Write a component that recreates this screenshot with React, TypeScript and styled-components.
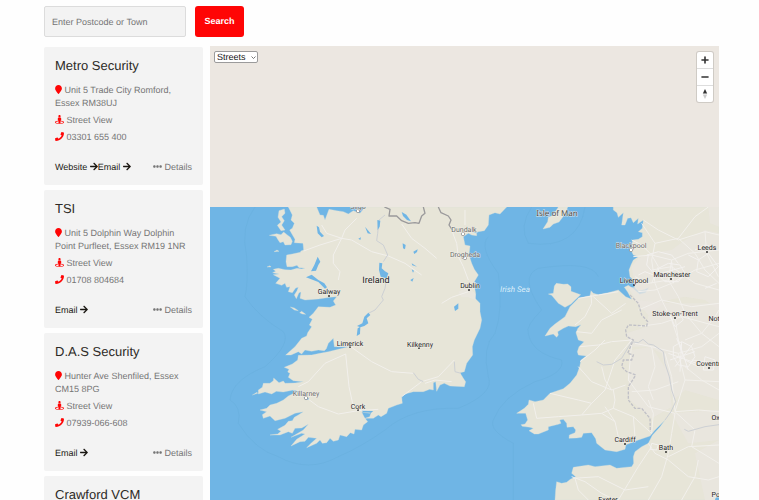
import React from "react";
import styled, { createGlobalStyle } from "styled-components";
import { FaMapMarker, FaStreetView, FaPhone, FaArrowRight, FaEllipsisH } from "react-icons/fa";

const GlobalStyle = createGlobalStyle`
  * { box-sizing: border-box; }
  body {
    margin: 0;
    background: #fefefe;
    color: #757575;
    font-family: "Liberation Sans", Arial, sans-serif;
    font-size: 9px;
    line-height: 13px;
    text-rendering: geometricPrecision;
    overflow: hidden;
  }
`;

const Page = styled.main`
  display: flex;
  flex-direction: column;
  gap: 9px;
  height: 100vh;
  padding: 6px 40px 0 44px;
  overflow: hidden;
`;

const SearchForm = styled.form`
  display: flex;
  gap: 9px;
  flex: none;
`;

const SearchInput = styled.input`
  width: 142px;
  height: 31px;
  padding: 0 7px;
  border: 1px solid #dcdcdc;
  border-radius: 2px;
  background: #f3f3f3;
  color: #444;
  font: inherit;
  text-rendering: inherit;
  &::placeholder { color: #757575; opacity: 1; }
`;

const SearchButton = styled.button`
  width: 49px;
  height: 31px;
  padding: 0;
  border: 0;
  border-radius: 3px;
  background: #ff0505;
  color: #fff;
  font: inherit;
  text-rendering: inherit;
  font-weight: 700;
`;

const Content = styled.div`
  display: grid;
  grid-template-columns: 159px minmax(0, 1fr);
  gap: 7px;
  flex: 1;
  min-height: 0;
`;

const Results = styled.ul`
  display: flex;
  flex-direction: column;
  gap: 5px;
  margin: 0;
  padding: 1px 0 0;
  list-style: none;
  overflow: hidden;
`;

const Card = styled.li`
  flex: none;
  padding: 11px;
  border-radius: 2px;
  background: #f3f3f3;
`;

const CardTitle = styled.h2`
  margin: 0 0 10px;
  color: #2d2a26;
  font-size: 13px;
  font-weight: 400;
  line-height: 16px;
`;

const Details = styled.div`
  display: flex;
  flex-direction: column;
  gap: 4px;
`;

const Line = styled.p<{ $iconWidth: number }>`
  margin: 0;
  svg {
    width: ${(p) => p.$iconWidth}px;
    height: 9px;
    color: #ff0505;
    vertical-align: -1px;
  }
`;

const CardLink = styled.a<{ $strong?: boolean }>`
  color: ${(p) => (p.$strong ? "#1a1712" : "inherit")};
  text-decoration: none;
  svg {
    width: ${(p) => (p.$strong ? 8 : 9)}px;
    height: 9px;
    vertical-align: -1px;
  }
`;

const CardFooter = styled.div`
  display: flex;
  justify-content: space-between;
  margin-top: 17px;
`;

const MapPanel = styled.section`
  position: relative;
  display: flex;
  flex-direction: column;
  padding-top: 161px;
  background: #ece7e1;
  overflow: hidden;
`;

const MapDrawing = styled.svg`
  display: block;
  flex: 1;
  width: 100%;
  min-height: 0;
  background: #6fb5e5;
`;

const StyleSelect = styled.select`
  position: absolute;
  top: 5px;
  left: 4px;
  width: 44px;
  height: 12px;
  padding: 0 2px;
  border: 1px solid #9b9b9b;
  border-radius: 2px;
  appearance: none;
  background: #fff;
  color: #111;
  font: inherit;
  text-rendering: inherit;
  line-height: 10px;
`;

const SelectArrow = styled.svg`
  position: absolute;
  top: 10px;
  left: 41px;
  width: 5px;
  height: 3px;
  pointer-events: none;
`;

const Controls = styled.div`
  position: absolute;
  top: 6px;
  right: 6px;
  display: flex;
  flex-direction: column;
  width: 16px;
  border-radius: 2px;
  background: #fff;
  box-shadow: 0 0 0 1px rgba(0, 0, 0, 0.12);
`;

const Control = styled.button`
  display: flex;
  align-items: center;
  justify-content: center;
  height: 17px;
  padding: 0;
  border: 0;
  background: none;
  & + & { border-top: 1px solid #ddd; }
  &:first-child { height: 16px; }
`;

const Town = styled.text<{ $minor?: boolean }>`
  fill: ${(p) => (p.$minor ? "#6a6a6a" : "#222")};
  font-family: Roboto, sans-serif;
  font-size: 7px;
  font-weight: 400;
  text-anchor: middle;
  paint-order: stroke;
  stroke: rgba(245, 243, 238, 0.8);
  stroke-width: 1px;
`;

const Region = styled(Town)`
  font-size: 9px;
`;

const Island = styled(Town)`
  font-family: "Noto Sans", sans-serif;
  font-size: 8px;
  fill: #4a4a4a;
`;

const SeaName = styled.text`
  fill: #dceefa;
  font-family: Roboto, sans-serif;
  font-size: 8px;
  font-style: italic;
  text-anchor: middle;
`;

type Company = {
  name: string;
  address: string;
  phone: string;
  website?: boolean;
};

const companies: Company[] = [
  { name: "Metro Security", address: "Unit 5 Trade City Romford, Essex RM38UJ", phone: "03301 655 400", website: true },
  { name: "TSI", address: "Unit 5 Dolphin Way Dolphin Point Purfleet, Essex RM19 1NR", phone: "01708 804684" },
  { name: "D.A.S Security", address: "Hunter Ave Shenfiled, Essex CM15 8PG", phone: "07939-066-608" },
  { name: "Crawford VCM", address: "", phone: "" },
];

const land = [
  // Ireland
  "M250 21 262 45 258 60 268 70 262 85 254 90 262 104 270 118 268 128 294 130 296 150 288 153 286 157 262 162 245 165 243 185 246 200 262 200 276 196 282 203 300 204 290 207 276 205 258 210 240 209 220 205 205 208 212 214 203 218 222 222 205 224 225 235 212 250 230 256 240 250 245 262 255 260 250 275 262 278 272 264 280 262 276 272 268 285 274 296 282 278 288 276 285 295 300 300 340 297 375 292 395 290 385 303 392 315 375 322 340 320 325 340 312 352 322 358 313 375 320 380 308 398 305 408 290 415 270 440 242 465 258 465 280 455 290 462 300 450 320 454 340 450 358 452 364 446 370 430 385 415 388 440 400 440 432 440 400 448 370 455 345 460 320 465 280 466 278 480 262 492 238 502 252 508 248 516 255 520 250 532 265 542 295 545 270 549 240 550 235 543 222 548 206 534 205 542 195 550 175 550 172 562 160 570 160 582 180 576 200 582 214 574 235 576 265 570 290 575 270 578 250 588 235 600 215 610 195 615 185 625 165 630 185 635 172 644 175 655 195 648 210 662 240 655 270 640 295 635 280 645 268 652 262 662 250 664 240 676 218 688 228 694 218 702 195 705 225 705 250 695 262 700 270 685 290 684 310 673 295 690 258 712 290 700 300 702 275 718 258 738 285 725 300 724 310 712 335 715 318 730 305 743 335 730 345 720 352 730 365 728 375 715 385 724 400 720 405 705 425 710 436 698 447 702 450 688 470 690 475 675 488 665 478 652 470 636 494 640 500 634 494 650 480 655 505 655 520 645 528 650 545 640 550 625 575 615 592 610 590 590 600 582 625 575 655 575 674 568 685 570 685 548 692 545 695 574 705 555 718 550 735 558 778 560 782 545 775 535 765 518 778 515 785 490 803 465 802 440 808 420 825 385 830 360 825 335 825 310 810 295 812 280 808 258 818 255 808 245 820 225 808 208 800 190 792 165 795 138 780 135 775 110 790 100 800 105 815 107 815 100 800 96 815 96 838 92 850 75 852 45 870 38 885 42 905 21 480 21 465 40 445 32 430 42 415 35 395 32 372 28 360 60 355 46 345 45 335 21Z",
  "M222 32 238 27 240 40 230 50 238 62 230 75 240 90 228 92 217 76 228 66 219 52Z",
  "M193 106 215 101 228 104 236 96 246 104 256 112 262 124 258 134 240 135 235 125 225 128 217 116 213 109Z",
  "M256 321 268 324 280 332 268 330ZM284 338 290 334 302 343 292 342ZM207 155 216 150 222 154ZM186 201 195 197 198 201ZM142 585 156 577 158 580Z",
  // Great Britain
  "M1225 21 1225 30 1236 38 1240 52 1255 38 1250 75 1260 75 1268 55 1278 53 1285 68 1300 55 1298 72 1315 60 1312 85 1300 95 1312 98 1312 110 1300 118 1283 120 1278 150 1285 165 1300 170 1285 180 1278 195 1272 210 1275 230 1290 245 1288 262 1300 273 1320 268 1332 262 1322 278 1304 283 1285 266 1270 256 1258 262 1268 276 1280 298 1262 290 1240 270 1210 278 1180 284 1165 280 1158 272 1155 287 1120 295 1095 320 1080 350 1050 372 1035 385 1020 408 1045 402 1055 412 1060 405 1058 395 1075 385 1090 378 1112 380 1128 374 1118 386 1113 398 1120 420 1137 425 1122 440 1117 455 1120 465 1144 468 1128 480 1124 500 1115 525 1095 550 1075 566 1035 580 1015 600 990 605 972 600 970 613 958 625 935 640 962 640 968 660 960 672 948 674 952 679 975 682 985 685 972 692 988 702 1000 702 1030 690 1030 680 1060 673 1068 670 1064 660 1075 658 1085 670 1086 682 1105 680 1112 690 1110 698 1093 705 1092 715 1115 714 1130 712 1135 700 1160 698 1172 716 1175 730 1200 750 1235 755 1260 748 1263 734 1300 720 1335 708 1350 690 1380 660 1364 682 1342 706 1330 730 1310 740 1290 755 1285 770 1286 790 1280 800 1235 805 1215 795 1170 800 1150 795 1105 802 1100 820 1112 830 1096 838 1085 847 1070 850 1055 845 1052 870 1050 900 1542 900 1542 21Z",
  // Anglesey
  "M1048 258 1054 250 1076 253 1088 252 1098 260 1098 274 1115 280 1127 284 1110 300 1098 312 1080 322 1060 310 1045 292 1040 286 1030 282 1045 280Z",
  // Isle of Man
  "M1014 87 1028 65 1030 52 1044 46 1060 21 1088 21 1084 34 1074 50 1062 66 1045 72 1035 82Z",
];

const urban = [
  "M1280 200 1300 175 1340 160 1400 150 1440 120 1500 90 1542 100 1542 330 1500 300 1440 290 1390 300 1350 330 1310 330 1270 262 1290 262Z",
  "M1290 300 1330 345 1325 380 1265 400 1275 440 1330 440 1370 460 1385 530 1405 600 1440 570 1542 600 1542 310 1400 310Z",
  "M1270 530 1275 600 1340 655 1400 620 1390 520 1340 440 1280 450Z",
  "M1400 640 1542 630 1542 720 1450 730Z",
  "M1470 760 1542 720 1542 900 1500 900Z",
  "M760 275 790 262 812 282 812 300 790 292 770 292Z",
  "M1510 21 1542 21 1542 80 1515 70Z",
];

const lakes = [
  "M335 77 342 82 345 95 357 108 350 112 338 100Z",
  "M338 170 346 185 340 195 333 212 318 214 328 195Z",
  "M303 232 320 224 340 240 358 250 366 262 360 266 340 246Z",
  "M517 60 526 62 524 80 518 90Z",
  "M523 188 532 190 530 205 540 214 550 220 545 235 527 230 522 210Z",
  "M490 338 496 345 485 355 490 370 478 378 466 382 456 378 472 370 478 350Z",
  "M458 385 466 380 465 402 455 408Z",
  "M480 80 490 92 498 102 488 100Z",
  "M460 116 468 112 466 120Z",
  "M590 36 604 44 618 64 606 60 594 48Z",
  "M593 130 602 135 600 148 594 145Z",
  "M625 155 638 148 636 156 628 162Z",
  "M620 190 636 200 622 196Z",
  "M616 240 626 234 622 245Z",
  "M620 208 627 212 624 218Z",
  "M747 320 760 310 760 326 750 333Z",
  "M296 592 308 590 312 598 302 600Z",
  "M470 632 505 633 498 638 475 637Z",
  "M1532 894 1542 888 1542 900 1530 900Z",
];

const roads =
  "M296 153 345 135 410 115 440 120 500 155 550 168 600 190 650 225M410 115 420 90 455 55M410 115 385 165 385 190 405 215 400 240M350 75 365 100 410 115" +
  "M590 72 620 115 660 145 695 175M740 90 755 130 760 170 775 200 790 240M780 30 780 75M790 275 740 292 710 310M440 442 500 485 560 515 625 520" +
  "M422 462 360 490 310 545 280 560M422 462 432 560 445 620M300 590 340 620 400 642 460 632 520 628M590 590 650 545 700 530 748 480M660 550 690 540 740 545" +
  "M1158 285 1160 310 1140 350 1110 375M1120 295 1180 285 1240 275M1165 290 1220 340 1262 310M1115 395 1160 400 1190 360 1250 330M1125 440 1180 435 1220 425 1280 420" +
  "M1125 485 1170 450 1200 420M1120 500 1160 545 1220 570 1262 555M1035 580 1120 600 1160 610 1200 570 1230 480 1280 420M985 610 995 655 1060 650 1130 645 1190 640 1230 665" +
  "M1160 610 1130 645M1200 620 1230 665 1240 710M1190 640 1225 625 1285 650 1340 700M1225 570 1230 600 1225 625M1220 570 1200 540 1190 500M1285 650 1290 710" +
  "M1100 830 1140 845 1190 880 1230 900M1105 835 1180 830 1260 870 1330 860M1110 835 1120 870 1150 900M1330 730 1350 760 1390 780 1450 830 1510 840 1542 830" +
  "M1340 740 1300 800 1270 850 1240 900M1390 760 1370 830 1330 900M1480 780 1470 830 1430 900M1390 770 1450 740 1542 735M1410 640 1400 700 1390 760M1410 635 1470 690 1460 740 1542 790" +
  "M1410 635 1480 630 1542 635M1280 430 1270 540 1330 620 1410 640M1330 600 1345 640 1340 700M1280 575 1350 570 1420 545M1340 440 1350 500 1330 560 1345 600" +
  "M1290 430 1340 440 1420 460 1490 440 1542 400M1380 460 1400 530 1410 635M1420 460 1440 540 1410 635M1440 500 1490 540 1542 570M1460 480 1542 490M1440 540 1542 545" +
  "M1430 450 1400 360 1370 300 1350 250 1340 180 1350 130 1310 70M1300 275 1350 270 1400 250 1470 210 1542 190M1285 170 1340 165 1400 180 1450 160 1542 150" +
  "M1315 60 1360 90 1420 120 1500 95 1542 105M1350 130 1420 115 1470 50 1510 21M1420 115 1470 160 1500 210 1542 250M1500 95 1505 160 1540 230" +
  "M1340 210 1400 200 1470 250 1542 270M1340 165 1360 200 1340 250M1400 180 1390 240 1420 290 1440 340 1490 400 1542 440M1300 330 1370 300 1460 320 1542 310" +
  "M1300 380 1370 370 1430 350 1542 380M1410 350 1420 420 1430 460M1440 420 1490 400 1530 350 1542 330M1280 120 1310 135 1340 165M1290 230 1330 250 1390 240";

const cityStreets =
  "M1405 440 1430 425 1460 440 1470 470 1450 500 1420 495 1405 470ZM1390 460 1475 490M1420 420 1450 510M1410 500 1465 430M1430 425 1425 515M1395 480 1470 455M1415 415 1440 480 1480 500" +
  "M1360 205 1390 190 1425 195 1440 220 1420 245 1380 245 1360 225ZM1350 225 1440 200M1400 185 1405 250M1325 165 1360 155 1400 165 1420 190M1330 165 1325 195 1350 225" +
  "M1470 150 1500 135 1535 145M1480 180 1510 160 1540 200 1510 230M1450 165 1480 180 1475 215 1510 230M1500 265 1535 250M1300 225 1320 215 1345 225" +
  "M1395 345 1420 335 1435 360 1410 380ZM1500 470 1530 480 1525 510 1495 510ZM1340 730 1360 735 1355 750 1335 748Z";

const contours =
  "M150 21Q105 80 125 170Q130 250 120 290Q160 350 235 395Q260 430 180 500Q80 540 75 600Q110 620 100 670Q150 750 220 770Q310 820 400 770Q470 740 540 690Q620 620 760 625Q870 580 850 530Q830 440 870 400Q895 330 880 220Q820 140 850 110" +
  "M925 900V730Q850 690 865 660Q890 590 990 545Q1080 520 1070 480Q980 460 970 400Q960 380 1010 330Q940 230 1000 205Q1160 180 1180 230M1140 21Q1120 150 970 130Q940 80 980 21";

type TownPin = { name: string; x: number; y: number; dotX: number; dotY: number; minor?: boolean };

const towns: TownPin[] = [
  { name: "Galway", x: 119, y: 87, dotX: 119, dotY: 89 },
  { name: "Limerick", x: 140, y: 139, dotX: 140, dotY: 140 },
  { name: "Kilkenny", x: 210, y: 140, dotX: 209, dotY: 141 },
  { name: "Dublin", x: 260, y: 81, dotX: 259, dotY: 83 },
  { name: "Cork", x: 148, y: 202, dotX: 148, dotY: 203 },
  { name: "Killarney", x: 96, y: 189, dotX: 96, dotY: 191, minor: true },
  { name: "Dundalk", x: 254, y: 25, dotX: 253, dotY: 27, minor: true },
  { name: "Drogheda", x: 255, y: 50, dotX: 255, dotY: 51, minor: true },
  { name: "Sligo", x: 148, y: 2, dotX: 148, dotY: 4, minor: true },
  { name: "Blackpool", x: 421, y: 41, dotX: 421, dotY: 43, minor: true },
  { name: "Leeds", x: 497, y: 43, dotX: 497, dotY: 45 },
  { name: "Manchester", x: 462, y: 70, dotX: 461, dotY: 72 },
  { name: "Liverpool", x: 424, y: 76, dotX: 424, dotY: 78 },
  { name: "Stoke-on-Trent", x: 465, y: 109, dotX: 465, dotY: 111 },
  { name: "Nottingham", x: 517, y: 114, dotX: 520, dotY: 116 },
  { name: "Coventry", x: 500, y: 159, dotX: 499, dotY: 161 },
  { name: "Cardiff", x: 415, y: 235, dotX: 415, dotY: 237 },
  { name: "Bath", x: 456, y: 243, dotX: 456, dotY: 245 },
  { name: "Oxford", x: 512, y: 213, dotX: 513, dotY: 215 },
  { name: "Exeter", x: 398, y: 295, dotX: 398, dotY: 297 },
  { name: "Portsmouth", x: 520, y: 290, dotX: 520, dotY: 292 },
];

function MapView() {
  return (
    <MapDrawing viewBox="0 0 509 293" preserveAspectRatio="xMinYMin slice" role="img" aria-label="Map of Ireland and Wales">
      <svg width="509" height="293" viewBox="15 21 1527 879" preserveAspectRatio="none">
        <path d={contours} fill="none" stroke="#63abd9" strokeWidth="2" opacity="0.5" />
        {land.map((d) => (
          <path key={d} d={d} fill="#e7e5d8" stroke="#d8e0dc" strokeWidth="1" />
        ))}
        {urban.map((d) => (
          <path key={d} d={d} fill="#eae6e0" opacity="0.8" />
        ))}
        <path d={roads} fill="none" stroke="#f2f0ec" strokeWidth="3" strokeLinejoin="round" />
        <path d={cityStreets} fill="none" stroke="#f3f1ef" strokeWidth="3" />
        <path
          d="M540 45 522 60 518 100 515 122 535 135 548 165 535 185M545 235 540 265 530 290 535 300 510 330 490 340M625 518 640 538 655 545M748 485 750 515 768 520M1175 485 1195 495 1220 493 1250 475 1280 425 1300 428 1314 418 1330 432 1345 435 1375 455 1380 490 1393 530 1400 570 1412 605 1398 635 1380 660M1438 688 1450 694 1500 680 1542 674"
          fill="none" stroke="#cdd0d4" strokeWidth="3" strokeLinejoin="round"
        />
        <path
          d="M1275 285 1300 310 1310 345 1328 365 1325 378 1270 375 1262 390 1265 410 1285 420 1268 460 1285 465 1280 480 1255 480 1250 500 1265 515 1292 525 1280 545 1270 560 1270 600 1290 625 1310 625 1335 655 1336 695"
          fill="none" stroke="#c0c0c6" strokeWidth="4" strokeDasharray="9 4"
        />
        <path
          d="M538 21 555 28 552 48 575 48 590 62 610 70 630 68 642 70 650 48 660 40 655 21M700 21 708 38 730 48 738 60 732 75 742 90"
          fill="none" stroke="#9a999b" strokeWidth="4" strokeLinejoin="round"
        />
        {lakes.map((d) => (
          <path key={d} d={d} fill="#6fb5e5" />
        ))}
      </svg>
      {towns.map((t) => (
        <g key={t.name}>
          <circle cx={t.dotX} cy={t.dotY} r={t.minor ? 1.7 : 1} fill={t.minor ? "#fff" : "#333"} stroke={t.minor ? "#888" : "none"} strokeWidth="0.7" />
          <Town x={t.x} y={t.y} $minor={t.minor}>{t.name}</Town>
        </g>
      ))}
      <Region x="166" y="76">Ireland</Region>
      <Island x="347" y="9">Isle of Man</Island>
      <SeaName x="305" y="85">Irish Sea</SeaName>
    </MapDrawing>
  );
}

function CompanyCard({ company }: { company: Company }) {
  return (
    <Card>
      <CardTitle>{company.name}</CardTitle>
      {company.address && (
        <>
          <Details>
            <Line $iconWidth={7}><FaMapMarker /> {company.address}</Line>
            <Line $iconWidth={9}><FaStreetView /><CardLink href="#street-view"> Street View</CardLink></Line>
            <Line $iconWidth={9}><FaPhone /><CardLink href={`tel:${company.phone}`}> {company.phone}</CardLink></Line>
          </Details>
          <CardFooter>
            <span>
              {company.website && <CardLink $strong href="#website">Website <FaArrowRight /></CardLink>}
              <CardLink $strong href="#email">Email <FaArrowRight /></CardLink>
            </span>
            <CardLink href="#details"><FaEllipsisH /> Details</CardLink>
          </CardFooter>
        </>
      )}
    </Card>
  );
}

export default function App() {
  return (
    <>
      <GlobalStyle />
      <Page>
        <SearchForm onSubmit={(e) => e.preventDefault()}>
          <SearchInput type="text" aria-label="Postcode or town" placeholder="Enter Postcode or Town" />
          <SearchButton type="submit">Search</SearchButton>
        </SearchForm>
        <Content>
          <Results>
            {companies.map((c) => <CompanyCard key={c.name} company={c} />)}
          </Results>
          <MapPanel>
            <MapView />
            <StyleSelect aria-label="Map style" defaultValue="Streets">
              <option>Streets</option>
            </StyleSelect>
            <SelectArrow viewBox="0 0 10 6">
              <path d="M1 1l4 4 4-4" fill="none" stroke="#555" strokeWidth="1.6" />
            </SelectArrow>
            <Controls>
              <Control type="button" aria-label="Zoom in">
                <svg width="8" height="8" viewBox="0 0 8 8"><path d="M4 1v6M1 4h6" stroke="#333" strokeWidth="1.6" strokeLinecap="round" /></svg>
              </Control>
              <Control type="button" aria-label="Zoom out">
                <svg width="8" height="8" viewBox="0 0 8 8"><path d="M1 4h6" stroke="#333" strokeWidth="1.6" strokeLinecap="round" /></svg>
              </Control>
              <Control type="button" aria-label="Reset bearing to north">
                <svg width="6" height="10" viewBox="0 0 6 10"><path d="M3 0 5.2 4.6H.8Z" fill="#333" /><path d="M3 10 5.2 5.4H.8Z" fill="#ccc" /></svg>
              </Control>
            </Controls>
          </MapPanel>
        </Content>
      </Page>
    </>
  );
}
